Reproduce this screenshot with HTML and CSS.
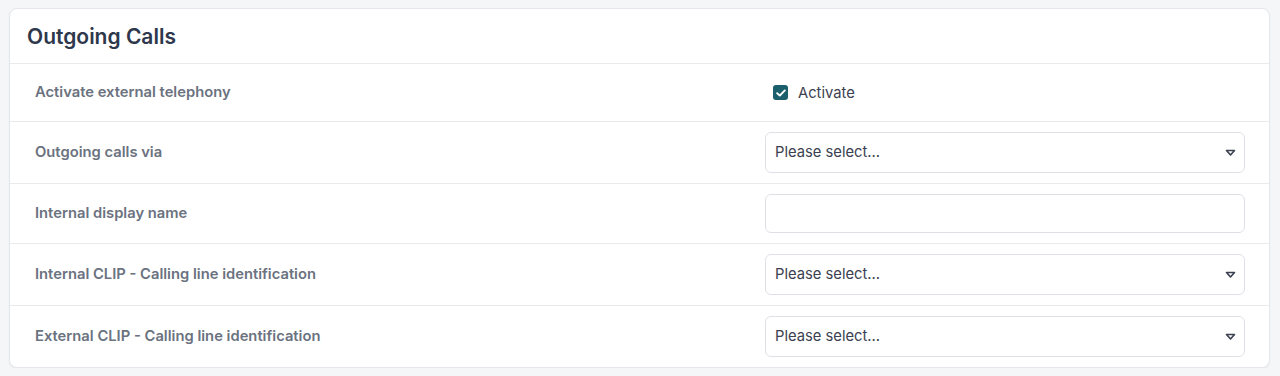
FILE: index.html
```html
<!DOCTYPE html>
<html lang="en">
<head>
<meta charset="utf-8">
<title>Outgoing Calls</title>
<link rel="stylesheet" href="styles.css">
</head>
<body>
<div class="card">
  <div class="card-header"><h2 class="title">Outgoing Calls</h2></div>
  <div class="row row-check">
    <div class="label">Activate external telephony</div>
    <div class="field">
      <label class="check">
        <span class="box"><svg width="10" height="8" viewBox="0 0 10 8"><path d="M1.2 4.2 L3.8 6.6 L8.8 1.4" fill="none" stroke="#fff" stroke-width="1.9" stroke-linecap="round" stroke-linejoin="round"/></svg></span>
        <span class="check-text">Activate</span>
      </label>
    </div>
  </div>
  <div class="row">
    <div class="label">Outgoing calls via</div>
    <div class="field">
      <div class="select"><span class="placeholder">Please select...</span><svg class="caret" width="11" height="8" viewBox="0 0 11 8"><path d="M1.5 1.5 H9.5 L5.5 6 Z" fill="none" stroke="#3b4150" stroke-width="1.6" stroke-linejoin="round"/></svg></div>
    </div>
  </div>
  <div class="row">
    <div class="label">Internal display name</div>
    <div class="field">
      <div class="input"></div>
    </div>
  </div>
  <div class="row">
    <div class="label">Internal CLIP - Calling line identification</div>
    <div class="field">
      <div class="select"><span class="placeholder">Please select...</span><svg class="caret" width="11" height="8" viewBox="0 0 11 8"><path d="M1.5 1.5 H9.5 L5.5 6 Z" fill="none" stroke="#3b4150" stroke-width="1.6" stroke-linejoin="round"/></svg></div>
    </div>
  </div>
  <div class="row last">
    <div class="label">External CLIP - Calling line identification</div>
    <div class="field">
      <div class="select"><span class="placeholder">Please select...</span><svg class="caret" width="11" height="8" viewBox="0 0 11 8"><path d="M1.5 1.5 H9.5 L5.5 6 Z" fill="none" stroke="#3b4150" stroke-width="1.6" stroke-linejoin="round"/></svg></div>
    </div>
  </div>
</div>
</body>
</html>
```
FILE: styles.css
```css
* { box-sizing: border-box; }
html, body { margin: 0; }
body {
  background: #f5f6f8;
  padding: 8px 10px 0 9px;
  font-family: Inter, "Noto Sans", "Liberation Sans", sans-serif;
}
.card {
  background: #fff;
  border: 1px solid #e4e7eb;
  border-radius: 8px;
  box-shadow: 0 1px 2px rgba(16, 24, 40, 0.05);
  overflow: hidden;
}
.card-header {
  height: 55px;
  border-bottom: 1px solid #e8eaee;
  display: flex;
  align-items: center;
  padding: 0 17px;
}
.title {
  margin: 0;
  font-size: 21px;
  font-weight: 600;
  color: #2e374b;
}
.row {
  display: grid;
  grid-template-columns: 755px 1fr;
  align-items: center;
  border-bottom: 1px solid #e8eaee;
  height: 62px;
}
.row-check { height: 58px; }
.row:nth-child(4) { height: 60px; }
.row.last { border-bottom: none; height: 61px; }
.label {
  padding-left: 25px;
  padding-bottom: 2px;
  font-size: 14.75px;
  font-weight: 600;
  color: #6b7280;
}
.field {
  padding-right: 24px;
}
.check {
  display: flex;
  align-items: center;
  gap: 10px;
  padding-left: 8px;
}
.box {
  width: 15px;
  height: 15px;
  border-radius: 3px;
  background: #1b5f6c;
  display: flex;
  align-items: center;
  justify-content: center;
}
.check-text {
  font-size: 14.75px;
  color: #3b4150;
}
.select, .input {
  height: 41px;
  border: 1px solid #dde0e5;
  border-radius: 6px;
  background: #fff;
  display: flex;
  align-items: center;
  justify-content: space-between;
  padding: 0 8px 0 9px;
  font-size: 14.75px;
  color: #3b4150;
}
.placeholder { padding-bottom: 2px; }
.input { height: 39px; }
.caret { margin-top: 1px; }
```
